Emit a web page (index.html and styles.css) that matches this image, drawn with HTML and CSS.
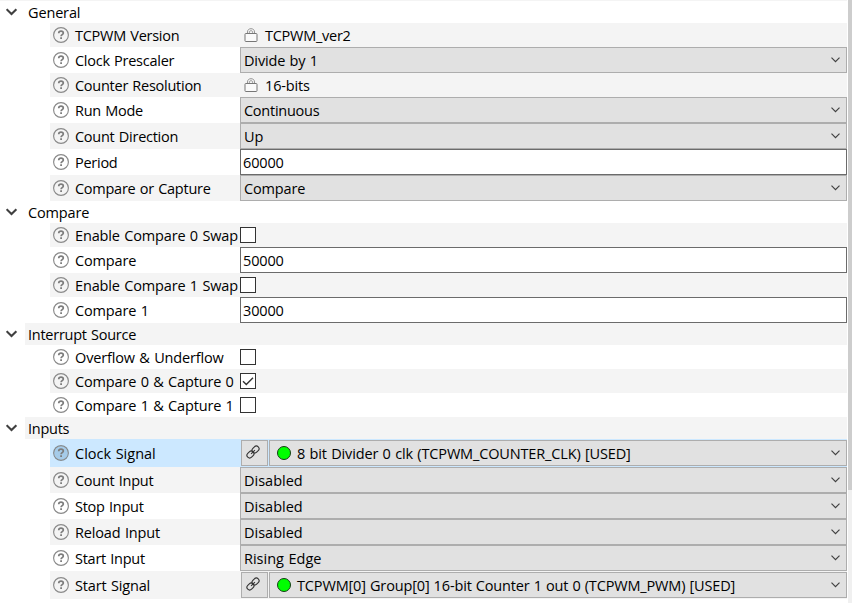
FILE: index.html
```html
<!DOCTYPE html>
<html lang="en">
<head>
<meta charset="utf-8">
<title>TCPWM Parameters</title>
<link rel="stylesheet" href="styles.css">
</head>
<body>
<svg class="defs" width="0" height="0">
  <symbol id="help" viewBox="0 0 16 16"><circle cx="8" cy="8" r="7.4" fill="none" stroke="#8a8a8a" stroke-width="1.15"/><path d="M5.7 6.2C5.8 4.7 6.7 4.200 8 4.200c1.400 0 2.300.7 2.300 1.800 0 1.500-2.200 1.700-2.200 3.200" fill="none" stroke="#7c7c7c" stroke-width="1.700"/><path d="M7.200 10.300h1.800V12H7.200z" fill="#7c7c7c"/></symbol>
  <symbol id="tree" viewBox="0 0 12 8"><path d="M.6 1.200 5.500 6.100 10.400 1.200" fill="none" stroke="#404040" stroke-width="2.100"/></symbol>
  <symbol id="drop" viewBox="0 0 10 6"><path d="M.5.6 4.500 4.600 8.500.6" fill="none" stroke="#404040" stroke-width="1.150"/></symbol>
  <symbol id="lock" viewBox="0 0 14 14"><path d="M3.500 6V4C3.500 1.800 5 .7 7 .7S10.500 1.800 10.500 4v2M5.400 6V4.300c0-1 .6-1.600 1.600-1.600s1.600.6 1.600 1.600V6" fill="none" stroke="#8a8a8a" stroke-width=".9"/><rect x="1" y="5.500" width="12" height="8" rx=".8" fill="#fafafa" stroke="#777"/></symbol>
  <symbol id="link" viewBox="0 0 14 14"><g fill="none" stroke="#333" stroke-width="1.100" transform="rotate(-45 7 7)"><rect x="-.4" y="4.300" width="7.600" height="5.400" rx="2.700"/><rect x="6.800" y="4.300" width="7.600" height="5.400" rx="2.700"/><path d="M4.300 7h5.400"/></g></symbol>
</svg>
<main class="panel">
  <div class="tree">
    <section class="group">
      <h2 class="head"><svg class="chev"><use href="#tree"/></svg><span>General</span></h2>
      <div class="row short alt"><label><svg class="help"><use href="#help"/></svg><span class="tight">TCPWM Version</span></label><div class="fixed"><svg class="lock"><use href="#lock"/></svg><span class="tight">TCPWM_ver2</span></div></div>
      <div class="row"><label><svg class="help"><use href="#help"/></svg><span class="tight">Clock Prescaler</span></label><div class="combo"><span>Divide by 1</span><svg class="drop"><use href="#drop"/></svg></div></div>
      <div class="row short alt"><label><svg class="help"><use href="#help"/></svg><span class="tight">Counter Resolution</span></label><div class="fixed"><svg class="lock"><use href="#lock"/></svg><span>16-bits</span></div></div>
      <div class="row"><label><svg class="help"><use href="#help"/></svg><span class="tight">Run Mode</span></label><div class="combo"><span class="tight">Continuous</span><svg class="drop"><use href="#drop"/></svg></div></div>
      <div class="row alt"><label><svg class="help"><use href="#help"/></svg><span class="tight">Count Direction</span></label><div class="combo"><span>Up</span><svg class="drop"><use href="#drop"/></svg></div></div>
      <div class="row"><label><svg class="help"><use href="#help"/></svg><span class="tight">Period</span></label><div class="field"><span>60000</span></div></div>
      <div class="row alt"><label><svg class="help"><use href="#help"/></svg><span class="tight">Compare or Capture</span></label><div class="combo"><span>Compare</span><svg class="drop"><use href="#drop"/></svg></div></div>
    </section>
    <section class="group">
      <h2 class="head"><svg class="chev"><use href="#tree"/></svg><span>Compare</span></h2>
      <div class="row short alt"><label><svg class="help"><use href="#help"/></svg><span>Enable Compare 0 Swap</span></label><div class="check"></div></div>
      <div class="row"><label><svg class="help"><use href="#help"/></svg><span>Compare</span></label><div class="field"><span>50000</span></div></div>
      <div class="row short alt"><label><svg class="help"><use href="#help"/></svg><span>Enable Compare 1 Swap</span></label><div class="check"></div></div>
      <div class="row"><label><svg class="help"><use href="#help"/></svg><span>Compare 1</span></label><div class="field"><span>30000</span></div></div>
    </section>
    <section class="group">
      <h2 class="head alt"><svg class="chev"><use href="#tree"/></svg><span class="tight">Interrupt Source</span></h2>
      <div class="row short"><label><svg class="help"><use href="#help"/></svg><span>Overflow &amp; Underflow</span></label><div class="check"></div></div>
      <div class="row short alt"><label><svg class="help"><use href="#help"/></svg><span>Compare 0 &amp; Capture 0</span></label><div class="check"><svg viewBox="0 0 14 14"><path d="M2 7.200 5.300 10.500 12 3.800" fill="none" stroke="#333" stroke-width="1.400"/></svg></div></div>
      <div class="row short"><label><svg class="help"><use href="#help"/></svg><span>Compare 1 &amp; Capture 1</span></label><div class="check"></div></div>
    </section>
    <section class="group">
      <h2 class="head alt"><svg class="chev"><use href="#tree"/></svg><span class="tight">Inputs</span></h2>
      <div class="row tall selected"><label><svg class="help"><use href="#help"/></svg><span class="loose">Clock Signal</span></label><div class="signal"><div class="button"><svg class="link"><use href="#link"/></svg></div><div class="combo"><i class="dot"></i><span>8 bit Divider 0 clk (TCPWM_COUNTER_CLK) [USED]</span><svg class="drop"><use href="#drop"/></svg></div></div></div>
      <div class="row alt"><label><svg class="help"><use href="#help"/></svg><span class="tight">Count Input</span></label><div class="combo"><span class="loose">Disabled</span><svg class="drop"><use href="#drop"/></svg></div></div>
      <div class="row"><label><svg class="help"><use href="#help"/></svg><span class="tight">Stop Input</span></label><div class="combo"><span class="loose">Disabled</span><svg class="drop"><use href="#drop"/></svg></div></div>
      <div class="row alt"><label><svg class="help"><use href="#help"/></svg><span>Reload Input</span></label><div class="combo"><span class="loose">Disabled</span><svg class="drop"><use href="#drop"/></svg></div></div>
      <div class="row"><label><svg class="help"><use href="#help"/></svg><span class="tight">Start Input</span></label><div class="combo"><span class="loose">Rising Edge</span><svg class="drop"><use href="#drop"/></svg></div></div>
      <div class="row tall alt"><label><svg class="help"><use href="#help"/></svg><span>Start Signal</span></label><div class="signal"><div class="button"><svg class="link"><use href="#link"/></svg></div><div class="combo"><i class="dot"></i><span class="route">TCPWM[0] Group[0] 16-bit Counter 1 out 0 (TCPWM_PWM) [USED]</span><svg class="drop"><use href="#drop"/></svg></div></div></div>
    </section>
  </div>
  <div class="scrollbar"><div class="thumb"></div></div>
</main>
</body>
</html>
```
FILE: styles.css
```css
* { box-sizing: border-box; }
body { margin: 0; background: #fff; color: #000; font: 14.5px/20px "Open Sans", "Noto Sans", sans-serif; letter-spacing: -0.15px; word-spacing: 0.8px; overflow: hidden; }
.defs { display: block; height: 0; }
svg { flex: none; display: block; }
span { display: block; padding-top: 2px; white-space: nowrap; }
.tight { letter-spacing: -0.26px; }
.loose { letter-spacing: 0; }
.route { word-spacing: 0.5px; }
.panel { display: flex; height: 603px; }
.tree { width: 847px; padding-top: 1px; background: linear-gradient(#f4f4f4 1px, #fff 1px); }
.head { display: flex; align-items: center; height: 22px; margin: 0; padding-left: 6px; font: inherit; }
.head.alt { background: linear-gradient(to right, #fff 25px, #f4f4f4 25px); }
.chev { width: 12px; height: 8px; margin-right: 10px; }
.row { display: grid; grid-template-columns: 190px 1fr; height: 26px; margin-left: 50px; align-items: center; }
.short { height: 24px; }
.tall { height: 28px; }
.row.alt { background: #f4f4f4; }
.row.selected { background: #cce8ff; }
label { display: flex; align-items: center; padding-left: 3px; }
.help { width: 16px; height: 16px; margin-right: 6px; }
.selected .help { background: #a5cbe9; border-radius: 50%; }
.fixed { display: flex; align-items: center; padding-left: 4px; }
.lock { width: 14px; height: 14px; margin-right: 7px; }
.combo { display: flex; align-items: center; height: 26px; padding: 0 5px 0 3px; border: 1px solid #adadad; background: #e1e1e1; }
.drop { width: 10px; height: 6px; margin-left: auto; }
.field { height: 26px; padding: 1px 2px; border: 1px solid #6b6b6b; background: #fff; }
.check { width: 16px; height: 16px; border: 1px solid #333; background: #fff; }
.signal { display: flex; gap: 1px; padding-left: 1px; }
.signal .combo { flex: 1; padding-left: 7px; }
.button { display: flex; align-items: center; width: 27px; height: 26px; padding: 0 0 2px 4px; border: 1px solid #adadad; background: #e1e1e1; }
.link { width: 14px; height: 14px; }
.dot { width: 14px; height: 14px; margin-right: 6px; border: 1px solid #163c16; border-radius: 50%; background: #0f0; }
.scrollbar { width: 4px; margin-left: 1px; background: #f0f0f0; }
.thumb { height: 490px; background: #cdcdcd; }
```
